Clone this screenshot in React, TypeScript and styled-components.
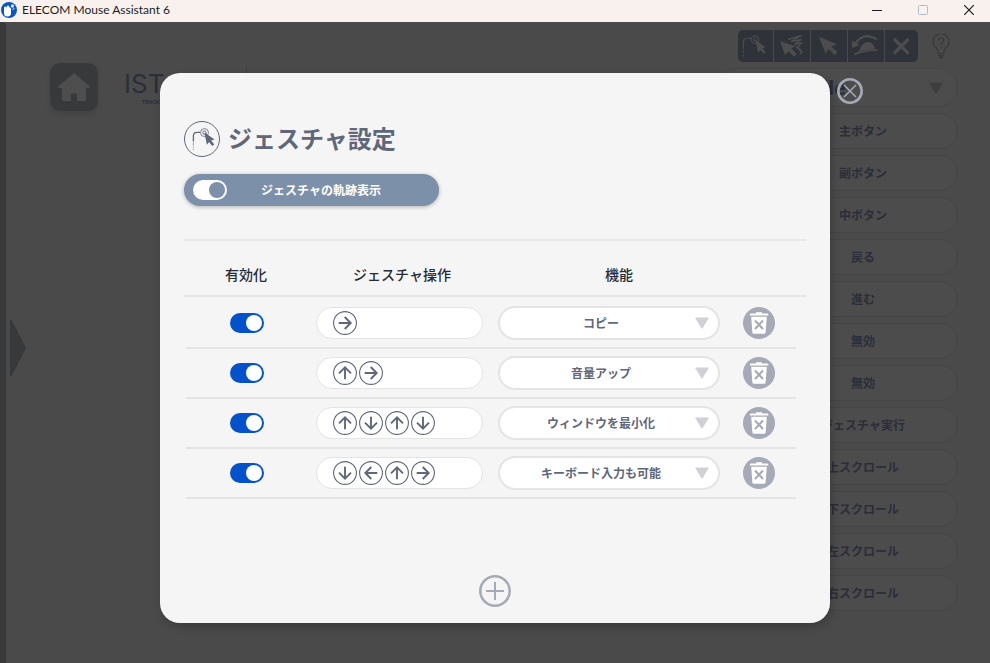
import React, { useState } from "react";
import styled, { createGlobalStyle } from "styled-components";

const INK = "#5f677b";
const MUTED = "#a6a9b6";
const LINE = "#e4e4e4";
const DIM = "#4a4a4a";
const DIM_DARK = "#38393b";
const DIM_TEXT = "#2b2e38";
const TOOL_BACK = "#2f3239";

const GlobalStyle = createGlobalStyle`
  * { box-sizing: border-box; }
  body {
    margin: 0;
    background: ${DIM};
    font-family: "Noto Sans", "Noto Sans CJK JP", sans-serif;
  }
  button, input, select { font: inherit; margin: 0; }
  button { padding: 0; border: 0; background: none; cursor: pointer; }
  svg { display: block; }
`;

const Window = styled.div`
  display: flex;
  flex-direction: column;
  min-height: 100vh;
`;

const TitleBar = styled.header`
  display: flex;
  align-items: center;
  gap: 4px;
  height: 22px;
  padding-bottom: 2px;
  background: #f9f1ee;
  color: #1d1d22;
`;

const WindowTitle = styled.h1`
  flex: 1;
  margin: 0;
  font: 400 12px/16px Lato, "Noto Sans", sans-serif;
`;

const WindowButton = styled.button<{ $color: string }>`
  display: grid;
  place-items: center;
  width: 42px;
  height: 20px;
  color: ${(p) => p.$color};
`;

const Workspace = styled.div`
  position: relative;
  display: flex;
  flex: 1;
  background: ${DIM};
`;

const Backdrop = styled.div`
  display: flex;
  flex: 1;
  min-width: 0;
`;

const Strip = styled.div`
  width: 6px;
  border-radius: 0 4px 0 0;
  background: ${DIM_DARK};
`;

const DrawerHandle = styled.button`
  align-self: center;
  width: 20px;
  padding: 10px 0 0 4px;
  color: ${DIM_DARK};
`;

const Brand = styled.div`
  display: flex;
  flex: 1;
  align-items: flex-start;
  gap: 26px;
  padding: 41px 0 0 24px;
`;

const HomeButton = styled.button`
  display: grid;
  place-items: center;
  width: 48px;
  height: 48px;
  border-radius: 10px;
  background: ${DIM_DARK};
  color: #4e4e4e;
  box-shadow: 0 3px 4px #434343;
`;

const Logo = styled.div`
  width: 96px;
  padding-top: 7px;
  color: ${DIM_TEXT};
  font: 400 26px/28px Inter, sans-serif;
`;

const LogoTag = styled.div`
  padding-left: 18px;
  font: 700 5px/8px Inter, sans-serif;
`;

const BrandRule = styled.div`
  width: 1px;
  height: 48px;
  margin-top: 5px;
  background: #3d3d3f;
`;

const SideColumn = styled.aside`
  display: flex;
  flex-direction: column;
  align-items: flex-end;
  gap: 6px;
  padding: 8px 32px 40px 0;
`;

const ToolRow = styled.div`
  display: flex;
  align-items: center;
  gap: 14px;
  padding-right: 8px;
`;

const Toolbar = styled.div`
  display: grid;
  grid-template-columns: 35px 37px 37px 37px 34px;
  height: 32px;
  border-radius: 5px;
  background: ${TOOL_BACK};
  color: #4d4d4f;
`;

const Tool = styled.button`
  display: flex;
  overflow: hidden;
  color: inherit;

  & + & { box-shadow: inset 1px 0 #4a4a4c; }
`;

const HintButton = styled.button`
  color: #39393b;
`;

const DimPill = styled.button`
  width: 190px;
  height: 36px;
  border: 1px solid #454545;
  border-radius: 18px;
  background: #4c4c4c;
  color: ${DIM_TEXT};
  font-size: 12px;
  font-weight: 700;
`;

const ProfileButton = styled(DimPill)`
  display: flex;
  align-items: center;
  width: 242px;
  height: 39px;
  padding: 0 14px 0 64px;
  border-radius: 20px;
  font-size: 20px;

  svg { margin-left: auto; color: #3e3e41; }
`;

const Overlay = styled.div`
  position: absolute;
  inset: 0;
  display: flex;
  padding: 51px 160px 40px;
`;

const Dialog = styled.section`
  position: relative;
  display: flex;
  flex: 1;
  flex-direction: column;
  min-width: 0;
  padding: 48px 24px 16px;
  border-radius: 20px;
  background: #f5f5f5;
  box-shadow: 2px 4px 8px rgba(0, 0, 0, 0.2);
`;

const CloseButton = styled.button`
  position: absolute;
  top: 5px;
  right: -33px;
  color: ${MUTED};
`;

const Heading = styled.div`
  display: flex;
  align-items: center;
  gap: 8px;
  height: 36px;
  color: ${INK};
`;

const DialogTitle = styled.h2`
  margin: 0;
  font-size: 24px;
  line-height: 36px;
  font-weight: 700;
`;

const TrailToggle = styled.label`
  display: flex;
  align-items: center;
  width: 255px;
  height: 32px;
  margin-top: 17px;
  padding: 0 24px 0 9px;
  border-radius: 16px;
  background: #7d90aa;
  box-shadow: 0 1px 4px rgba(0, 0, 0, 0.28);
  color: #fff;
  font-size: 12px;
  font-weight: 700;

  span { flex: 1; text-align: center; }
`;

const Switch = styled.input<{ $track: string; $knob: string }>`
  appearance: none;
  display: flex;
  align-items: center;
  justify-content: flex-end;
  width: 34px;
  height: 20px;
  padding: 2px;
  border-radius: 10px;
  background: ${(p) => p.$track};
  cursor: pointer;

  &::before {
    content: "";
    width: 16px;
    height: 16px;
    border-radius: 50%;
    background: ${(p) => p.$knob};
  }
  &:not(:checked) { justify-content: flex-start; opacity: 0.6; }
`;

const Table = styled.table`
  display: block;
  margin-top: 33px;
  border-top: 2px solid #e8e8e8;
`;

const TableHead = styled.thead`
  display: block;
`;

const HeadRow = styled.tr`
  display: grid;
  grid-template-columns: 124fr 188fr 246fr 64fr;
  height: 56px;
  border-bottom: 2px solid ${LINE};
`;

const HeadCell = styled.th`
  padding: 24px 0 0;
  color: #262b38;
  font-size: 14px;
  line-height: 20px;
  font-weight: 500;
  text-align: center;
`;

const TableBody = styled.tbody`
  display: block;
  padding: 2px 10px 0 2px;
`;

const Row = styled.tr`
  display: grid;
  grid-template-columns: 122fr 183fr 236fr 69fr;
  height: 50px;
  border-bottom: 2px solid ${LINE};
`;

const Cell = styled.td<{ $start?: boolean }>`
  display: flex;
  align-items: center;
  justify-content: ${(p) => (p.$start ? "flex-start" : "center")};
  min-width: 0;
  padding: 0 ${(p) => (p.$start ? 16 : 7)}px;
`;

const GestureBox = styled.div`
  display: flex;
  flex: 1;
  align-items: center;
  gap: 2px;
  height: 32px;
  margin: 0 1px;
  padding: 0 16px;
  border: 1px solid ${LINE};
  border-radius: 16px;
  background: #fff;
  color: ${INK};
`;

const SelectWrap = styled.div`
  display: grid;
  flex: 1;
  align-items: center;
  color: #d0d1d6;

  > * { grid-area: 1 / 1; }
  > svg { justify-self: end; margin-right: 11px; pointer-events: none; }
`;

const FunctionSelect = styled.select`
  appearance: none;
  width: 100%;
  height: 34px;
  padding: 0 32px 0 16px;
  border: 2px solid ${LINE};
  border-radius: 17px;
  background: #fff;
  color: ${INK};
  font-size: 12px;
  font-weight: 700;
  text-align: center;
  text-align-last: center;
`;

const AddButton = styled.button`
  align-self: center;
  margin-top: auto;
  color: ${MUTED};
`;

type Direction = "up" | "right" | "down" | "left";

const TURN: Record<Direction, number> = { up: 0, right: 90, down: 180, left: 270 };
const DIRECTION_NAME: Record<Direction, string> = { up: "上", right: "右", down: "下", left: "左" };

const ArrowIcon = ({ direction }: { direction: Direction }) => (
  <svg width="24" height="24" viewBox="0 0 24 24" fill="none" stroke="currentColor" role="img" aria-label={DIRECTION_NAME[direction]}>
    <circle cx="12" cy="12" r="11.4" strokeWidth="1.1" />
    <path d="M12 18.3V6.5M6 12.3l6-6 6 6" strokeWidth="1.9" transform={`rotate(${TURN[direction]} 12 12)`} />
  </svg>
);

const TriangleIcon = () => (
  <svg width="14" height="12" viewBox="0 0 14 12" fill="currentColor">
    <path d="M1 .5h12q1 0 .5 1L7.7 11q-.7 1-1.4 0L.5 1.5Q0 .5 1 .5z" />
  </svg>
);

const TrashIcon = () => (
  <svg width="32" height="32" viewBox="0 0 32 32">
    <circle cx="16" cy="16" r="16" fill={MUTED} />
    <path d="M13 5.2h6v1.4h5.2q1.2 0 1.2 1.1v.9H6.8v-.9q0-1.1 1.2-1.1h5z" fill="#fff" />
    <path d="M8.2 9.8h15.6l-1.2 15.6q-.1 1.4-1.4 1.4H10.8q-1.3 0-1.4-1.4z" fill="#fff" />
    <path d="M12 13.5l8 8.5M20 13.5l-8 8.5" stroke={MUTED} strokeWidth="2" />
  </svg>
);

const GestureIcon = () => (
  <svg width="36" height="36" viewBox="0 0 36 36" fill="none" stroke="currentColor">
    <circle cx="18" cy="18" r="17.5" />
    <path d="M9.4 20.5V15q0-3.6 3.6-3.6h3" strokeWidth="1.3" />
    <path d="M9.4 21.5v3M9.4 25.5v1.2M9.4 28v1" strokeWidth="1.1" opacity=".6" />
    <circle cx="20.5" cy="11.6" r="4" strokeWidth=".8" />
    <circle cx="20.5" cy="11.6" r="1.7" strokeWidth=".9" />
    <path d="M20.3 11.2l10.2 7.2-3.3 1 3.1 4-2.2 1.7-3-4.1-2.2 2.8z" fill="currentColor" stroke="none" />
  </svg>
);

const ToolSvg = ({ children }: { children: React.ReactNode }) => (
  <svg width="36" height="32" viewBox="0 0 36 32" fill="none" stroke="currentColor">{children}</svg>
);

const TOOLS = [
  {
    label: "ジェスチャ",
    icon: (
      <ToolSvg>
        <path d="M5.5 19v-6Q5.5 8 10 8h3.5" strokeWidth="1.2" />
        <path d="M5.5 20v3M5.5 24.5v2.5" />
        <circle cx="17.5" cy="9.5" r="4" />
        <circle cx="17.5" cy="9.5" r="1.6" />
        <path d="M18 10l10.5 7-3.5 1.2 3.5 4-2 1.8-3.5-4-2.2 3z" fill="currentColor" stroke="none" />
      </ToolSvg>
    ),
  },
  {
    label: "高速ポインタ",
    icon: (
      <ToolSvg>
        <path d="M15 9.5l13.5-4L18 11.5l10.5-2-7 4.5 7-1-4 4 4 3.5M22 15l7 7.5-2 1.5" strokeWidth="1.4" />
        <path d="M6.5 10.5l17 6-5 2 5.5 5.5-3 3-5.5-5.5-3.5 4.5z" fill="currentColor" stroke={TOOL_BACK} strokeWidth=".6" />
      </ToolSvg>
    ),
  },
  {
    label: "ポインタ",
    icon: (
      <ToolSvg>
        <path d="M9 6.7l18 7.6-6 2.2 6.5 5.5-3 3-6-6-3 4.5z" fill="currentColor" stroke="none" />
      </ToolSvg>
    ),
  },
  {
    label: "ホイール",
    icon: (
      <ToolSvg>
        <path d="M8 14Q17 1 30 9.5" strokeWidth="2" />
        <path d="M5 10.5v7.5l7.5-3z" fill="currentColor" stroke="none" />
        <path d="M12 21q3-9 9-9 5 0 7 6.5z" fill="currentColor" stroke="none" />
        <path d="M7 24.5q10-4.5 23-4.5" strokeWidth="1.8" />
      </ToolSvg>
    ),
  },
  {
    label: "無効",
    icon: (
      <ToolSvg>
        <path d="M11.5 9.5l13.5 13.5M25 9.5L11.5 23" strokeWidth="3.5" strokeLinecap="round" />
      </ToolSvg>
    ),
  },
];

const BulbIcon = () => (
  <svg width="18" height="25" viewBox="0 0 18 25" fill="none" stroke="currentColor">
    <path d="M6 19.5v-2.5q0-1.5-1.5-2.8a8 8 0 1 1 9 0q-1.5 1.3-1.5 2.8v2.5z" strokeWidth="1.2" />
    <path d="M6.5 6.5a2.6 2.6 0 1 1 4 2.3q-1.5 1-1.5 2.5M9 13v1.3" strokeWidth="1.2" />
    <path d="M6 21.5h6M7 23.5h4" strokeWidth="1.6" />
  </svg>
);

const AppIcon = () => (
  <svg width="18" height="18" viewBox="0 0 18 18">
    <circle cx="9" cy="9" r="8" fill="#0756c9" />
    <path d="M4 7.5q0-2 1.2-2t1.3 1q.2-2 1.5-2t1.5 2q1.5-.5 1.5 1.5v4q0 3.5-3.5 3.5T4 12z" fill="#fff" />
    <circle cx="12.5" cy="5" r="1.7" fill="#cfe0fa" />
    <path d="M12.5 8.5l2-1" stroke="#cfe0fa" />
  </svg>
);

const BUTTONS = [
  "主ボタン", "副ボタン", "中ボタン", "戻る", "進む", "無効", "無効",
  "ジェスチャ実行", "上スクロール", "下スクロール", "左スクロール", "右スクロール",
];

const FUNCTIONS = ["コピー", "音量アップ", "ウィンドウを最小化", "キーボード入力も可能"];

const GESTURES: Direction[][] = [
  ["right"],
  ["up", "right"],
  ["up", "down", "up", "down"],
  ["down", "left", "up", "right"],
];

function GestureRow({ steps, initial }: { steps: Direction[]; initial: string }) {
  const [enabled, setEnabled] = useState(true);
  const [action, setAction] = useState(initial);
  return (
    <Row>
      <Cell>
        <Switch
          type="checkbox"
          aria-label="有効化"
          $track="#0352cc"
          $knob="#fff"
          checked={enabled}
          onChange={(e) => setEnabled(e.target.checked)}
        />
      </Cell>
      <Cell>
        <GestureBox>
          {steps.map((step, i) => <ArrowIcon key={i} direction={step} />)}
        </GestureBox>
      </Cell>
      <Cell>
        <SelectWrap>
          <FunctionSelect aria-label="機能" value={action} onChange={(e) => setAction(e.target.value)}>
            {FUNCTIONS.map((name) => <option key={name}>{name}</option>)}
          </FunctionSelect>
          <TriangleIcon />
        </SelectWrap>
      </Cell>
      <Cell $start>
        <button type="button" aria-label="削除"><TrashIcon /></button>
      </Cell>
    </Row>
  );
}

export default function App() {
  const [trail, setTrail] = useState(true);
  return (
    <Window>
      <GlobalStyle />
      <TitleBar>
        <AppIcon />
        <WindowTitle>ELECOM Mouse Assistant 6</WindowTitle>
        <WindowButton $color="#1d1d22" aria-label="最小化">
          <svg width="10" height="10" stroke="currentColor"><path d="M0 5.5h10" /></svg>
        </WindowButton>
        <WindowButton $color="#b4bccb" aria-label="最大化">
          <svg width="10" height="10" fill="none" stroke="currentColor"><rect x=".5" y=".5" width="9" height="9" rx="1" /></svg>
        </WindowButton>
        <WindowButton $color="#1d1d22" aria-label="閉じる">
          <svg width="10" height="10" stroke="currentColor"><path d="M0 0l10 10M10 0L0 10" strokeWidth="1.2" /></svg>
        </WindowButton>
      </TitleBar>
      <Workspace>
        <Backdrop>
          <Strip />
          <DrawerHandle aria-label="メニューを開く">
            <svg width="16" height="56" fill="currentColor"><path d="M0 0h1.5L16 28 1.5 56H0z" /></svg>
          </DrawerHandle>
          <Brand>
            <HomeButton aria-label="ホーム">
              <svg width="32" height="28" viewBox="0 0 32 28" fill="currentColor">
                <path d="M16 0l16 13.5-1 1.5h-3v11.5q0 1.5-1.5 1.5H19v-6.5q0-1-1-1h-4q-1 0-1 1V28H5.5Q4 28 4 26.5V15H1l-1-1.5z" />
              </svg>
            </HomeButton>
            <Logo>
              IST
              <LogoTag>TRACKBALL</LogoTag>
            </Logo>
            <BrandRule />
          </Brand>
          <SideColumn>
            <ToolRow>
              <Toolbar>
                {TOOLS.map((tool) => <Tool key={tool.label} aria-label={tool.label}>{tool.icon}</Tool>)}
              </Toolbar>
              <HintButton aria-label="ヒント"><BulbIcon /></HintButton>
            </ToolRow>
            <ProfileButton>
              Profile
              <TriangleIcon />
            </ProfileButton>
            {BUTTONS.map((name, i) => <DimPill key={i}>{name}</DimPill>)}
          </SideColumn>
        </Backdrop>
        <Overlay>
          <Dialog role="dialog" aria-labelledby="dialog-title">
            <CloseButton aria-label="ダイアログを閉じる">
              <svg width="26" height="26" viewBox="0 0 26 26" fill="none" stroke="currentColor">
                <circle cx="13" cy="13" r="11.7" strokeWidth="2.6" />
                <path d="M7 7l12 12M19 7L7 19" strokeWidth="1.5" />
              </svg>
            </CloseButton>
            <Heading>
              <GestureIcon />
              <DialogTitle id="dialog-title">ジェスチャ設定</DialogTitle>
            </Heading>
            <TrailToggle>
              <Switch
                type="checkbox"
                $track="#fff"
                $knob="#7d90aa"
                checked={trail}
                onChange={(e) => setTrail(e.target.checked)}
              />
              <span>ジェスチャの軌跡表示</span>
            </TrailToggle>
            <Table>
              <TableHead>
                <HeadRow>
                  <HeadCell scope="col">有効化</HeadCell>
                  <HeadCell scope="col">ジェスチャ操作</HeadCell>
                  <HeadCell scope="col">機能</HeadCell>
                </HeadRow>
              </TableHead>
              <TableBody>
                {GESTURES.map((steps, i) => <GestureRow key={i} steps={steps} initial={FUNCTIONS[i]} />)}
              </TableBody>
            </Table>
            <AddButton aria-label="追加">
              <svg width="32" height="32" viewBox="0 0 32 32" fill="none" stroke="currentColor">
                <circle cx="16" cy="16" r="14.7" strokeWidth="2.6" />
                <path d="M7 16h18M16 7v18" strokeWidth="2" />
              </svg>
            </AddButton>
          </Dialog>
        </Overlay>
      </Workspace>
    </Window>
  );
}
